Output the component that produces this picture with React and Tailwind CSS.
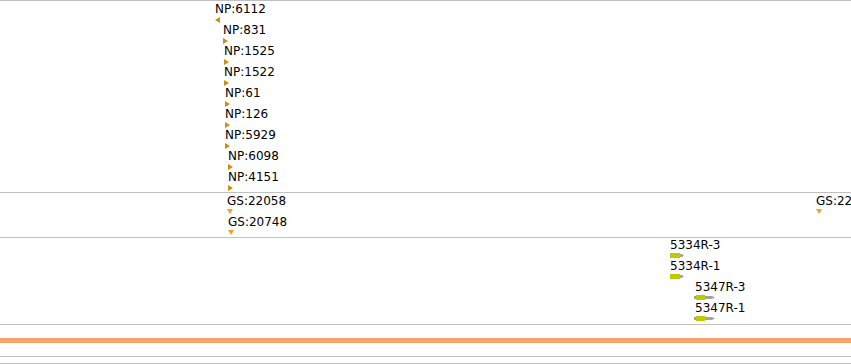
const npFeatures = [
  { label: "NP:6112", x: 215, dir: "left" },
  { label: "NP:831", x: 223, dir: "right" },
  { label: "NP:1525", x: 224, dir: "right" },
  { label: "NP:1522", x: 224, dir: "right" },
  { label: "NP:61", x: 225, dir: "right" },
  { label: "NP:126", x: 225, dir: "right" },
  { label: "NP:5929", x: 225, dir: "right" },
  { label: "NP:6098", x: 228, dir: "right" },
  { label: "NP:4151", x: 228, dir: "right" },
];

const gsFeatures = [
  { label: "GS:22058", x: 227, y: 1 },
  { label: "GS:20748", x: 228, y: 22 },
  { label: "GS:22", x: 816, y: 1 },
];

const geneFeatures = [
  { label: "5334R-3", x: 670, y: 0, kind: "short" },
  { label: "5334R-1", x: 670, y: 21, kind: "short" },
  { label: "5347R-3", x: 694, y: 42, kind: "long" },
  { label: "5347R-1", x: 694, y: 63, kind: "long" },
];

function Marker({ dir }) {
  if (dir === "left")
    return (
      <svg width="5" height="6" viewBox="0 0 5 6">
        <polygon points="0,3 5,0 5,6" fill="#c8900e" />
      </svg>
    );
  if (dir === "down")
    return (
      <svg width="6" height="5" viewBox="0 0 6 5">
        <polygon points="0,0 6,0 3,5" fill="#f2a31e" />
      </svg>
    );
  return (
    <svg width="5" height="6" viewBox="0 0 5 6">
      <polygon points="0,0 5,3 0,6" fill="#c8900e" />
    </svg>
  );
}

function GeneBar({ kind }) {
  if (kind === "short")
    return (
      <svg width="15" height="5" viewBox="0 0 15 5">
        <rect x="0" y="0" width="10" height="5" fill="#bfca00" />
        <polygon points="10,1 12,1 14,2.5 12,4 10,4" fill="#a3a3a3" />
      </svg>
    );
  return (
    <svg width="22" height="5" viewBox="0 0 22 5">
      <rect x="0" y="1" width="2" height="3" fill="#a3a3a3" />
      <rect x="2" y="0" width="9" height="5" fill="#bfca00" />
      <polygon points="11,1 18,1 21,2.5 18,4 11,4" fill="#a3a3a3" />
    </svg>
  );
}

function Feature({ x, y, label, children, labelOffset = 0 }) {
  return (
    <div className="absolute flex flex-col" style={{ left: x, top: y }}>
      <span className="whitespace-nowrap text-[12px] leading-[14px] text-black" style={{ marginLeft: labelOffset }}>
        {label}
      </span>
      <div className="mt-px flex">{children}</div>
    </div>
  );
}

export default function App() {
  return (
    <div
      className="relative h-[364px] w-[851px] overflow-hidden bg-white"
      style={{ fontFamily: '"DejaVu Sans", Verdana, sans-serif' }}
    >
      {/* NP track */}
      <div className="relative h-[192px] border-t border-[#c0c0c0]">
        {npFeatures.map((f, i) => (
          <Feature key={f.label} x={f.x} y={1 + 21 * i} label={f.label}>
            <Marker dir={f.dir} />
          </Feature>
        ))}
      </div>

      {/* GS track */}
      <div className="relative h-[45px] border-t border-[#c0c0c0]">
        {gsFeatures.map((f) => (
          <Feature key={f.label} x={f.x} y={f.y} label={f.label}>
            <Marker dir="down" />
          </Feature>
        ))}
      </div>

      {/* gene track */}
      <div className="relative h-[87px] border-t border-[#c0c0c0]">
        {geneFeatures.map((f) => (
          <Feature key={f.label} x={f.x} y={f.y} label={f.label} labelOffset={f.kind === "long" ? 1 : 0}>
            <GeneBar kind={f.kind} />
          </Feature>
        ))}
      </div>

      <div className="h-[14px] border-t border-[#c0c0c0]" />
      <div className="h-[5px] bg-[#f4a36c]" />
      <div className="h-[13px]" />
      <div className="h-[7px] border-t border-[#c0c0c0]" />
      <div className="h-px border-t border-[#c0c0c0]" />
    </div>
  );
}
